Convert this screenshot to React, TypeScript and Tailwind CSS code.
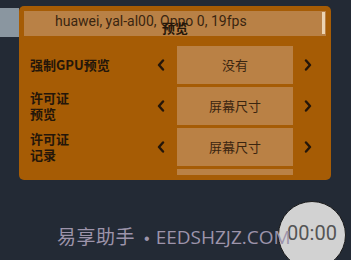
import React from 'react';

const ROWS = [
  { label: ['强制GPU预览'], value: '没有' },
  { label: ['许可证', '预览'], value: '屏幕尺寸' },
  { label: ['许可证', '记录'], value: '屏幕尺寸' },
  { label: [], value: '' },
];

function Chevron({ dir }: { dir: 'left' | 'right' }) {
  return (
    <svg width="8" height="12" viewBox="0 0 8 12" className="block">
      <polyline
        points={dir === 'left' ? '6,1.5 2,6 6,10.5' : '2,1.5 6,6 2,10.5'}
        fill="none"
        stroke="#24160a"
        strokeWidth="2.4"
        strokeLinecap="round"
        strokeLinejoin="round"
      />
    </svg>
  );
}

export default function App() {
  return (
    <div className="relative w-[351px] h-[260px] overflow-hidden bg-[#232a35] font-['Noto_Sans','Noto_Sans_CJK_SC',sans-serif]">
      {/* strip of the app behind the dialog */}
      <div className="absolute left-0 top-[8px] w-[19px] h-[29px] bg-[#8a96a0]" />

      <div className="relative pt-[6px] pl-[19px]">
        {/* Preview panel */}
        <div className="w-[312px] h-[174px] rounded-[5px] bg-[#a65c05] p-[5px] flex flex-col">
          <div className="relative h-[25px] shrink-0 bg-[#b98146] flex items-start">
            <span className="pl-[31px] pt-[2px] text-[14px] leading-[17px] text-[#3a2510] font-['Roboto',sans-serif]">
              huawei, yal-al00, Oppo 0, 19fps
            </span>
            <span className="absolute left-1/2 -translate-x-1/2 top-[9px] text-[13px] leading-[16px] font-bold text-[#24160a] font-['Noto_Sans_CJK_SC',sans-serif]">
              预览
            </span>
            <div className="absolute right-[1px] top-[1px] w-[3px] h-[22px] bg-[#ecd3b2]" />
          </div>

          <div className="mt-[10px] flex-1 overflow-hidden flex flex-col gap-[3px]">
            {ROWS.map((row, i) => (
              <div key={i} className="h-[38px] shrink-0 flex items-center pl-[6px] pr-[8px]">
                <div className="flex-1 text-[13px] leading-[16px] font-bold text-[#24160a] font-['Noto_Sans_CJK_SC',sans-serif]">
                  {row.label.map((l) => (
                    <div key={l}>{l}</div>
                  ))}
                </div>
                <div className="w-[20px] flex justify-center">
                  {row.value && <Chevron dir="left" />}
                </div>
                <div className="ml-[6px] w-[116px] h-full bg-[#ba8145] flex items-center justify-center text-[13px] text-[#3a2510] font-['Noto_Sans_CJK_SC',sans-serif]">
                  {row.value}
                </div>
                <div className="ml-[5px] w-[20px] flex justify-center">
                  {row.value && <Chevron dir="right" />}
                </div>
              </div>
            ))}
          </div>
        </div>
      </div>

      {/* floating timer */}
      <div className="absolute left-[278px] top-[201px] w-[68px] h-[68px] rounded-full bg-[#d2d2d2] border-[1.5px] border-[#1c1c1c] flex items-center justify-center pb-[5px]">
        <span className="text-[20px] text-[#555555] font-['Roboto',sans-serif]">00:00</span>
      </div>

      {/* watermark */}
      <div className="relative mt-[43px] pl-[57px] flex items-baseline whitespace-nowrap text-[#9d94ab] leading-[26px]">
        <span className="text-[19px] tracking-[0.5px] font-['Noto_Sans_CJK_SC',sans-serif]">易享助手</span>
        <span className="ml-[9px] text-[16px] font-['Liberation_Sans',sans-serif]">•</span>
        <span className="ml-[6px] text-[19px] font-['Open_Sans',sans-serif]">EEDSHZJZ.COM</span>
      </div>
    </div>
  );
}
